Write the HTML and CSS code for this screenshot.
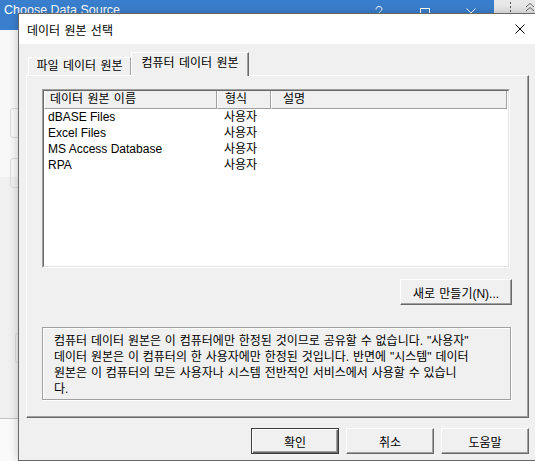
FILE: index.html
```html
<!DOCTYPE html>
<html lang="ko">
<head>
<meta charset="utf-8">
<title>데이터 원본 선택</title>
<link rel="stylesheet" href="styles.css">
</head>
<body>
<div class="desk">
  <div class="back">
    <div class="back-bar">
      <div class="back-cap">
        <span class="back-title">Choose Data Source</span>
        <div class="back-ctrls">
          <div class="cb"><svg width="10" height="12" viewBox="0 0 10 12"><path d="M2 3.5 C2 1.5 3.5 0.5 5 0.5 C6.8 0.5 8 1.6 8 3.2 C8 5 5 5.5 5 8" fill="none" stroke="#fff" stroke-width="1"/></svg></div>
          <div class="cb"><svg width="10" height="12" viewBox="0 0 10 12"><rect x="0.5" y="2.5" width="9" height="9" fill="none" stroke="#fff" stroke-width="1"/></svg></div>
          <div class="cb"><svg width="10" height="12" viewBox="0 0 10 12"><path d="M0.5 2.5 L9.5 11.5 M9.5 2.5 L0.5 11.5" fill="none" stroke="#fff" stroke-width="1"/></svg></div>
        </div>
      </div>
      <div class="back-tool">
        <svg class="dots" width="3" height="12" viewBox="0 0 3 12"><rect x="1" y="1" width="1" height="2" fill="#555"/><rect x="1" y="5" width="1" height="2" fill="#555"/><rect x="1" y="9" width="1" height="2" fill="#555"/></svg>
        <svg class="chev" width="10" height="12" viewBox="0 0 10 12"><path d="M1 6 L5 2.5 L9 6 M1 10 L5 6.5 L9 10" fill="none" stroke="#666" stroke-width="1"/></svg>
      </div>
    </div>
    <div class="back-upper">
      <div class="faint-box"></div>
      <div class="faint-box second"></div>
    </div>
    <div class="back-mid">
      <div class="faint-box third"></div>
    </div>
    <div class="back-low"></div>
  </div>

  <div class="dialog">
    <div class="dlg-title">
      <span>데이터 원본 선택</span>
      <svg width="10" height="10" viewBox="0 0 10 10"><path d="M0.5 0.5 L9.5 9.5 M9.5 0.5 L0.5 9.5" fill="none" stroke="#000" stroke-width="1"/></svg>
    </div>
    <div class="dlg-body">
      <div class="tabs">
        <div class="tab">파일 데이터 원본</div>
        <div class="tab active">컴퓨터 데이터 원본</div>
      </div>
      <div class="panel">
        <div class="list">
          <div class="list-in">
            <div class="list-head">
              <div class="hc c1">데이터 원본 이름</div>
              <div class="hc c2">형식</div>
              <div class="hc c3">설명</div>
            </div>
            <div class="row"><span class="r1">dBASE Files</span><span class="r2">사용자</span></div>
            <div class="row"><span class="r1">Excel Files</span><span class="r2">사용자</span></div>
            <div class="row"><span class="r1">MS Access Database</span><span class="r2">사용자</span></div>
            <div class="row"><span class="r1">RPA</span><span class="r2">사용자</span></div>
          </div>
        </div>
        <div class="new-row"><button class="btn new">새로 만들기(N)...</button></div>
        <div class="info">컴퓨터 데이터 원본은 이 컴퓨터에만 한정된 것이므로 공유할 수 없습니다. "사용자"<br>데이터 원본은 이 컴퓨터의 한 사용자에만 한정된 것입니다. 반면에 "시스템" 데이터<br>원본은 이 컴퓨터의 모든 사용자나 시스템 전반적인 서비스에서 사용할 수 있습니<br>다.</div>
      </div>
      <div class="actions">
        <button class="btn act default">확인</button>
        <button class="btn act">취소</button>
        <button class="btn act">도움말</button>
      </div>
    </div>
  </div>
</div>
</body>
</html>
```
FILE: styles.css
```css
* { box-sizing: border-box; }

body {
  margin: 0;
  font-family: "Liberation Sans", "Noto Sans CJK KR", sans-serif;
  font-size: 12px;
  color: #000;
}

.desk {
  position: relative;
  width: 535px;
  height: 461px;
  overflow: hidden;
  background: #f0f0f0;
}

/* background window */
.back {
  display: flex;
  flex-direction: column;
  height: 100%;
}
.back-bar {
  display: flex;
  height: 30px;
  flex: none;
}
.back-cap {
  width: 495px;
  background: #3a7fcd;
  color: #fff;
  display: flex;
  padding-left: 4px;
}
.back-title {
  padding-top: 2px;
  line-height: 16px;
  font-size: 12.5px;
}
.back-ctrls {
  margin-left: auto;
  display: flex;
}
.cb {
  width: 46px;
  display: flex;
  justify-content: center;
  padding-top: 6px;
}
.back-tool {
  flex: 1;
  background: #e8e8e8;
  display: flex;
  gap: 13px;
  padding: 1px 0 0 15px;
}
.back-upper {
  height: 147px;
  background: #f8f8f8;
  padding: 78px 0 0 10px;
  flex: none;
}
.faint-box {
  width: 40px;
  height: 30px;
  border: 1px solid #dcdcdc;
  border-radius: 3px;
}
.faint-box.second {
  margin-top: 20px;
  height: 30px;
}
.back-mid {
  height: 242px;
  flex: none;
  border-bottom: 1px solid #c4c4c4;
  padding: 156px 0 0 15px;
}
.faint-box.third {
  width: 30px;
  height: 30px;
}
.back-low {
  flex: 1;
  background: #fafafa;
}

/* dialog */
.dialog {
  position: absolute;
  left: 18px;
  top: 13px;
  width: 519px;
  height: 448px;
  background: #f0f0f0;
  border: 1px solid #686868;
  box-shadow: 0 0 9px rgba(0, 0, 0, 0.22);
  display: flex;
  flex-direction: column;
}
.dlg-title {
  height: 30px;
  flex: none;
  background: #fff;
  display: flex;
  align-items: center;
  justify-content: space-between;
  padding: 0 11px 0 8px;
  font-size: 12px;
  word-spacing: 1px;
}
.dlg-body {
  padding: 8px 7px 0 7px;
  display: flex;
  flex-direction: column;
}

.tabs {
  display: flex;
  align-items: flex-start;
  height: 23px;
  padding-left: 2px;
  word-spacing: 1px;
}
.tab {
  margin-top: 5px;
  width: 103px;
  height: 18px;
  line-height: 16px;
  text-align: center;
  background: #f0f0f0;
  border: 1px solid;
  border-color: #fff #a0a0a0 transparent #fff;
  border-bottom: 0;
}
.tab.active {
  margin-top: 0;
  width: 118px;
  height: 24px;
  padding-top: 2px;
  border-color: #fff #696969 transparent #fff;
  box-shadow: inset -1px 0 #a0a0a0;
  position: relative;
  z-index: 1;
}

.panel {
  height: 343px;
  border: 1px solid;
  border-color: #fff #696969 #696969 #fff;
  box-shadow: inset -1px -1px #a0a0a0;
  padding: 13px 18px 17px 15px;
  display: flex;
  flex-direction: column;
}

.list {
  height: 179px;
  border: 1px solid;
  border-color: #a0a0a0 #fff #fff #a0a0a0;
  flex: none;
}
.list-in {
  height: 100%;
  border: 1px solid;
  border-color: #696969 #e3e3e3 #e3e3e3 #696969;
  background: #fff;
}
.list-head {
  display: flex;
  height: 18px;
  word-spacing: 1px;
}
.hc {
  height: 18px;
  line-height: 17px;
  background: #f0f0f0;
  border-left: 1px solid #fff;
  border-right: 1px solid #a0a0a0;
  border-bottom: 1px solid #a0a0a0;
  white-space: nowrap;
}
.c1 { width: 173px; padding-left: 5px; }
.c2 { width: 54px; padding-left: 7px; }
.c3 { width: 236px; padding-left: 11px; }

.row {
  display: flex;
  height: 16px;
  line-height: 16px;
}
.r1 { width: 173px; padding-left: 4px; }
.r2 { padding-left: 7px; }

.btn {
  font: inherit;
  color: #000;
  background: #f0f0f0;
  border: 1px solid;
  border-color: #fff #696969 #696969 #fff;
  box-shadow: inset -1px -1px #a0a0a0;
  padding: 0;
  height: 26px;
}
.btn.default {
  border-color: #3c3c3c;
  box-shadow: inset 1px 1px #fff, inset -1px -1px #696969, inset -2px -2px #a0a0a0;
}

.new-row {
  display: flex;
  justify-content: flex-end;
  margin: 11px -2px 0 0;
}
.btn.new { width: 112px; word-spacing: 1px; }

.info {
  margin: 22px -1px 0 0;
  height: 73px;
  border: 1px solid #a0a0a0;
  box-shadow: inset 1px 1px #fff, 1px 1px #fff;
  padding: 5px 0 0 11px;
  line-height: 16px;
  white-space: nowrap;
  word-spacing: 0.5px;
}

.actions {
  display: flex;
  justify-content: flex-end;
  gap: 7px;
  margin-top: 10px;
}
.btn.act { width: 88px; }
```
